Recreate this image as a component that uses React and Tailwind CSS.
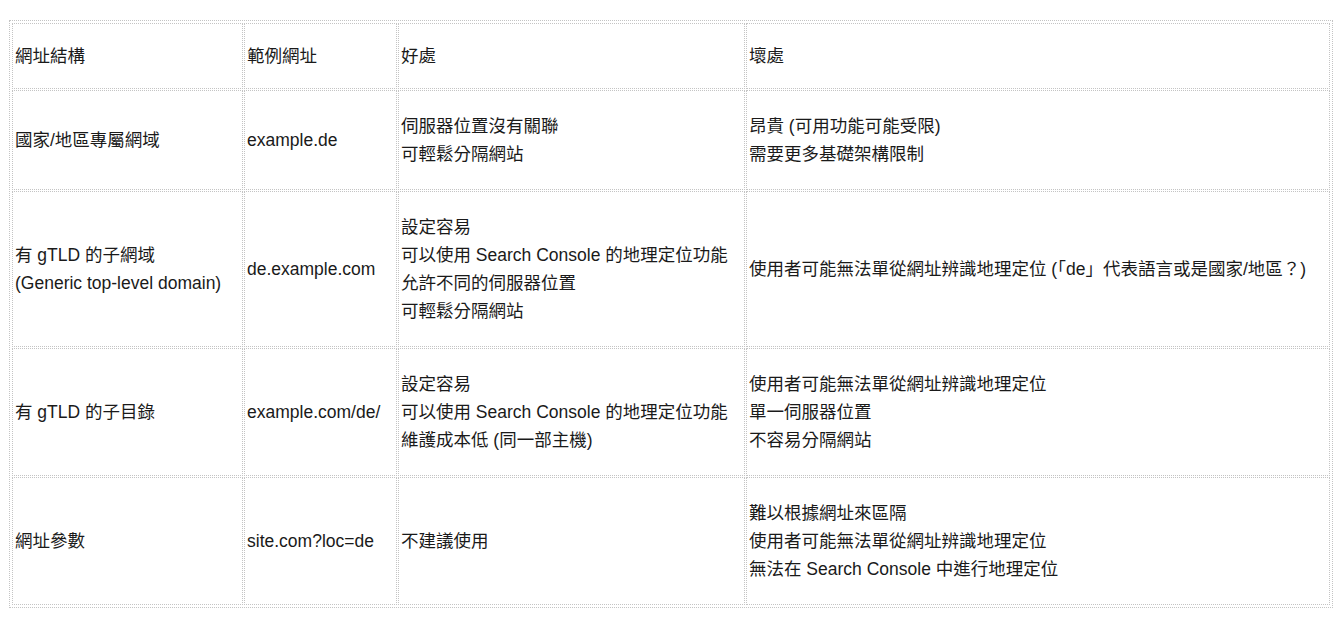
const rows = [
  {
    structure: ["國家/地區專屬網域"],
    example: "example.de",
    pros: ["伺服器位置沒有關聯", "可輕鬆分隔網站"],
    cons: ["昂貴 (可用功能可能受限)", "需要更多基礎架構限制"],
  },
  {
    structure: ["有 gTLD 的子網域", "(Generic top-level domain)"],
    example: "de.example.com",
    pros: ["設定容易", "可以使用 Search Console 的地理定位功能", "允許不同的伺服器位置", "可輕鬆分隔網站"],
    cons: ["使用者可能無法單從網址辨識地理定位 (「de」代表語言或是國家/地區？)"],
  },
  {
    structure: ["有 gTLD 的子目錄"],
    example: "example.com/de/",
    pros: ["設定容易", "可以使用 Search Console 的地理定位功能", "維護成本低 (同一部主機)"],
    cons: ["使用者可能無法單從網址辨識地理定位", "單一伺服器位置", "不容易分隔網站"],
  },
  {
    structure: ["網址參數"],
    example: "site.com?loc=de",
    pros: ["不建議使用"],
    cons: ["難以根據網址來區隔", "使用者可能無法單從網址辨識地理定位", "無法在 Search Console 中進行地理定位"],
  },
];

const base = "border border-dotted border-[#c4c4c4] px-[2px] text-left align-middle font-normal whitespace-nowrap";
const headCell = `${base} py-[18px]`;
const cell = `${base} py-[21px]`;

function Lines({ items }) {
  return items.map((t, i) => <div key={i}>{t}</div>);
}

export default function App() {
  return (
    <div
      className="min-h-screen bg-white pt-5 pl-[9px] text-[17.5px] leading-[28px] text-[#1a1a1a]"
      style={{ fontFamily: '"Liberation Sans", "Noto Sans CJK TC", sans-serif' }}
    >
      <table className="table-fixed w-[1323px] border-separate border-spacing-px p-px border border-dotted border-[#c4c4c4]">
        <thead>
          <tr>
            <th className={`${headCell} w-[231px]`}>網址結構</th>
            <th className={`${headCell} w-[153px]`}>範例網址</th>
            <th className={`${headCell} w-[347px]`}>好處</th>
            <th className={`${headCell} w-[584px]`}>壞處</th>
          </tr>
        </thead>
        <tbody>
          {rows.map((r, i) => (
            <tr key={i}>
              <td className={cell}>
                <Lines items={r.structure} />
              </td>
              <td className={cell}>{r.example}</td>
              <td className={cell}>
                <Lines items={r.pros} />
              </td>
              <td className={cell}>
                <Lines items={r.cons} />
              </td>
            </tr>
          ))}
        </tbody>
      </table>
    </div>
  );
}
